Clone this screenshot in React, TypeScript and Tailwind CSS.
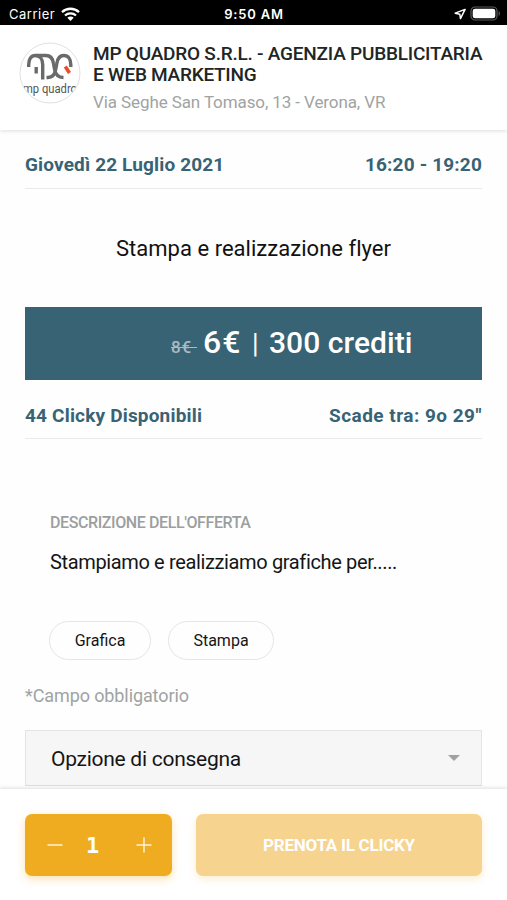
import type { ReactNode } from "react";

function StatusBar() {
  return (
    <div className="grid h-[25px] shrink-0 grid-cols-3 items-center bg-black px-[9px] font-['Inter','Liberation_Sans',sans-serif] text-[13px] text-white">
      <div className="flex items-center gap-[6px] pt-[3px] leading-none">
        <span className="tracking-[0.5px]">Carrier</span>
        <svg width="19" height="15" viewBox="0 0 19 15" fill="none" stroke="white" strokeWidth="2.3">
          <path d="M1 5.2C5.8.6 13.2.6 18 5.2" />
          <path d="M4 8.5c3.1-2.9 7.9-2.9 11 0" />
          <path d="M9.5 14 6.3 10.8c1.8-1.6 4.6-1.6 6.4 0Z" fill="white" stroke="none" />
        </svg>
      </div>
      <div className="pt-[3px] pl-px text-center leading-none font-semibold tracking-[0.8px] whitespace-nowrap">9:50 AM</div>
      <div className="flex items-center justify-end gap-[4px] pt-[2px]">
        <svg width="12" height="12" viewBox="0 0 13 13" fill="none" stroke="white" strokeWidth="1.6" strokeLinejoin="round">
          <path d="M12 1.5 1.3 5.6l5 1.1.7 4.8Z" />
        </svg>
        <svg className="-mr-[3px]" width="31" height="15" viewBox="0 0 31 15">
          <rect x="1" y="1" width="26" height="13" rx="4" fill="none" stroke="#5c5c5c" strokeWidth="1.2" />
          <rect x="2.7" y="2.7" width="22.6" height="9.6" rx="2.4" fill="white" />
          <path d="M28.6 5v5c1.8-.8 1.8-4.2 0-5Z" fill="#5c5c5c" />
        </svg>
      </div>
    </div>
  );
}

function CompanyLogo() {
  return (
    <svg className="shrink-0" width="62" height="62" viewBox="0 0 62 62">
      <defs>
        <clipPath id="disc">
          <circle cx="31" cy="31" r="29.5" />
        </clipPath>
      </defs>
      <circle cx="31" cy="31" r="30" fill="white" stroke="#e0e0e0" />
      <g fill="none" stroke="#6a6a6a" strokeWidth="3.4">
        <path d="M9.7 25v-2.5c0-5.500 2.500-9 6.500-9 4.500 0 7.500 3.500 7.500 9V37.500" />
        <path d="M17.200 25v6.500" />
        <path d="M17 13.500h10c4.500 0 6.800 3 7.500 8l1 5.500c.8 5 3.200 8.500 9 8.500" />
        <path d="M27.500 35.500h1.500c5 0 7-3.500 7.800-8.500l1-5.500c.8-5 3-8 7-8 4.500 0 7 3.500 7 9V25" />
      </g>
      <path d="m46.300 24.500 4.200 6.500" fill="none" stroke="#e8502a" strokeWidth="3.600" />
      <text
        x="4"
        y="50.5"
        clipPath="url(#disc)"
        textLength="54"
        lengthAdjust="spacingAndGlyphs"
        fill="#555"
        fontFamily="Roboto, sans-serif"
        fontSize="12.5"
      >
        mp quadro
      </text>
    </svg>
  );
}

function CompanyHeader() {
  return (
    <header className="relative z-10 flex h-[105px] shrink-0 items-start bg-white pt-[17px] pl-[19px] shadow-[0_1px_4px_rgba(0,0,0,0.13)]">
      <CompanyLogo />
      <div className="pt-px pl-[12px] whitespace-nowrap">
        <h1 className="text-[19px] leading-[21px] font-medium text-[#202526]">
          <span className="tracking-[-0.22px]">MP QUADRO S.R.L. - AGENZIA PUBBLICITARIA</span>
          <br />
          <span className="tracking-[-0.26px]">E WEB MARKETING</span>
        </h1>
        <p className="pt-[6px] text-[17px] leading-[23px] tracking-[-0.1px] text-[#a0a3a3]">Via Seghe San Tomaso, 13 - Verona, VR</p>
      </div>
    </header>
  );
}

function InfoRow({ children, className }: { children: ReactNode; className: string }) {
  return (
    <div className={`flex items-center justify-between border-b border-[#e9eaea] text-[19px] font-bold whitespace-nowrap text-[#386374] ${className}`}>
      {children}
    </div>
  );
}

function Tag({ children, className }: { children: ReactNode; className: string }) {
  return (
    <span className={`flex h-[39px] items-center justify-center rounded-full border border-[#e4e5e5] text-[16px] text-[#151515] ${className}`}>
      {children}
    </span>
  );
}

function BottomBar() {
  return (
    <footer className="relative z-10 flex h-[111px] shrink-0 items-start gap-[24px] bg-white px-[25px] pt-[25px] shadow-[0_-1px_4px_rgba(0,0,0,0.13)]">
      <div className="flex h-[62px] w-[147px] items-center justify-between rounded-[7px] bg-[#efac20] pr-[20px] pl-[22px] text-white shadow-[0_3px_8px_rgba(240,172,32,0.35)]">
        <svg width="16" height="16" viewBox="0 0 16 16" stroke="#fff2d4" strokeWidth="1.5">
          <path d="M.5 8h15" />
        </svg>
        <span className="pt-[2px] pr-[14px] font-['DejaVu_Sans_Mono',monospace] text-[22px] leading-none font-bold">1</span>
        <svg width="16" height="16" viewBox="0 0 16 16" stroke="#fff2d4" strokeWidth="1.5">
          <path d="M.5 8h15M8 .5v15" />
        </svg>
      </div>
      <button className="h-[62px] w-[286px] rounded-[7px] bg-[#f6d38f] pt-[2px] text-[17px] font-bold tracking-[-0.25px] text-white shadow-[0_3px_8px_rgba(240,172,32,0.2)]">
        PRENOTA IL CLICKY
      </button>
    </footer>
  );
}

export default function App() {
  return (
    <div className="flex h-[900px] w-[507px] flex-col overflow-hidden bg-white font-['Roboto','Liberation_Sans',sans-serif]">
      <StatusBar />
      <CompanyHeader />
      <main className="min-h-0 flex-1 overflow-hidden bg-[#fefefe] px-[25px]">
        <InfoRow className="mt-[11px] h-[48px] pt-px">
          <span className="tracking-[0.15px]">Giovedì 22 Luglio 2021</span>
          <span className="tracking-[0.17px]">16:20 - 19:20</span>
        </InfoRow>
        <h2 className="flex h-[118px] items-center justify-center pt-px text-[22px] tracking-[0.03px] text-[#111]">Stampa e realizzazione flyer</h2>
        <div className="flex h-[73px] items-baseline bg-[#386374] pt-[17px] pl-[146px] whitespace-nowrap text-white">
          <span className="w-[26px] text-[17px] font-medium tracking-[0.8px] text-[#a8bbc3] line-through">8€&nbsp;</span>
          <span className="w-[51px] pl-[6px] text-[32px] leading-[36px] font-medium tracking-[1px]">6€</span>
          <span className="w-[21px] pl-[4px] text-[27px] leading-[36px]">|</span>
          <span className="text-[30px] leading-[36px] font-medium tracking-[0.05px]">300 crediti</span>
        </div>
        <InfoRow className="h-[59px] pt-[14px]">
          <span className="tracking-[0.18px]">44 Clicky Disponibili</span>
          <span className="tracking-[0.47px]">Scade tra: 9o 29&quot;</span>
        </InfoRow>
        <section className="px-[25px] pt-[73px]">
          <h3 className="text-[16px] leading-[22px] font-medium tracking-[-0.4px] text-[#9c9fa0]">DESCRIZIONE DELL&apos;OFFERTA</h3>
          <p className="pt-[14px] text-[20px] leading-[28px] tracking-[-0.36px] text-[#151515]">Stampiamo e realizziamo grafiche per.....</p>
          <div className="-ml-px flex gap-[17px] pt-[45px]">
            <Tag className="w-[102px]">Grafica</Tag>
            <Tag className="w-[106px]">Stampa</Tag>
          </div>
        </section>
        <p className="pt-[22px] text-[18px] leading-[28px] tracking-[-0.1px] text-[#a0a3a3]">*Campo obbligatorio</p>
        <div className="mt-[20px] flex h-[56px] items-center justify-between border border-[#e2e4e5] border-b-[#dcdfe1] bg-[#f6f6f6] pr-[21px] pl-[25px] text-[21px] text-[#151515]">
          <span className="pt-[3px] tracking-[-0.27px]">Opzione di consegna</span>
          <svg width="12" height="6" viewBox="0 0 12 6">
            <path d="M0 0h12L6 6Z" fill="#a0a2a2" />
          </svg>
        </div>
      </main>
      <BottomBar />
    </div>
  );
}
